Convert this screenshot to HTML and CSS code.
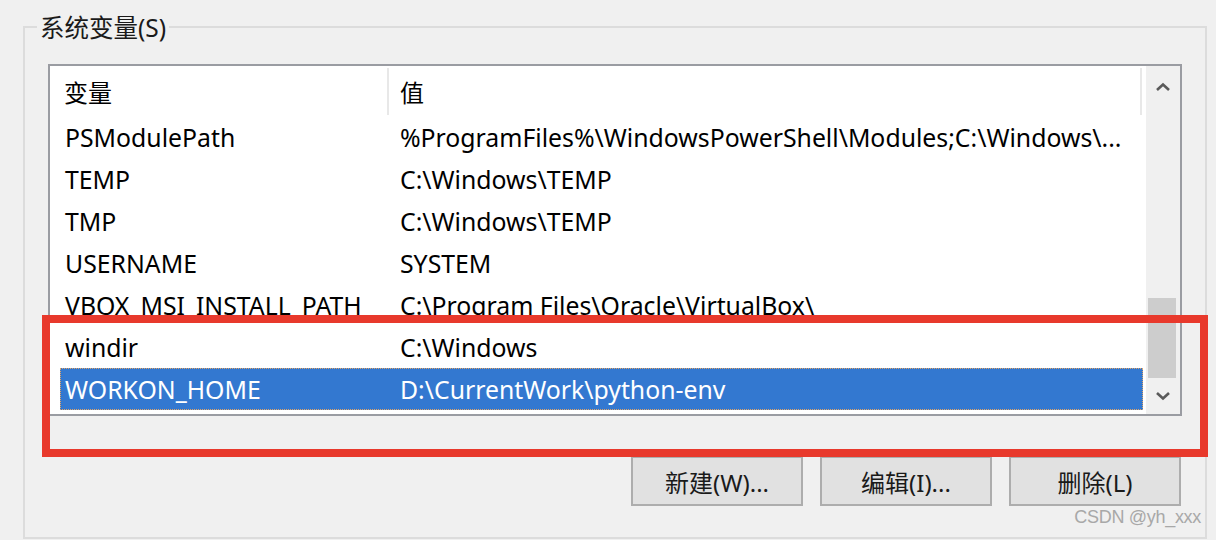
FILE: index.html
```html
<!DOCTYPE html>
<html lang="zh-CN">
<head>
<meta charset="utf-8">
<title>系统变量</title>
<link rel="stylesheet" href="styles.css">
</head>
<body>
<div class="group">
  <div class="group-title">系统变量(S)</div>
  <div class="listview">
    <div class="list-main">
      <div class="header">
        <div class="hcell hcell-first">变量</div>
        <div class="hcell hcell-second">值</div>
      </div>
      <div class="row"><div class="cell c1">PSModulePath</div><div class="cell c2">%ProgramFiles%\WindowsPowerShell\Modules;C:\Windows\...</div></div>
      <div class="row"><div class="cell c1">TEMP</div><div class="cell c2">C:\Windows\TEMP</div></div>
      <div class="row"><div class="cell c1">TMP</div><div class="cell c2">C:\Windows\TEMP</div></div>
      <div class="row"><div class="cell c1">USERNAME</div><div class="cell c2">SYSTEM</div></div>
      <div class="row"><div class="cell c1">VBOX_MSI_INSTALL_PATH</div><div class="cell c2">C:\Program Files\Oracle\VirtualBox\</div></div>
      <div class="row"><div class="cell c1">windir</div><div class="cell c2">C:\Windows</div></div>
      <div class="row selected"><div class="cell c1">WORKON_HOME</div><div class="cell c2">D:\CurrentWork\python-env</div></div>
    </div>
    <div class="scrollbar">
      <div class="sb-btn sb-up">
        <svg width="16" height="10" viewBox="0 0 16 10"><polyline points="2,8 8,2.5 14,8" fill="none" stroke="#5a5a5a" stroke-width="2.6"/></svg>
      </div>
      <div class="sb-track"><div class="sb-thumb"></div></div>
      <div class="sb-btn sb-down">
        <svg width="16" height="10" viewBox="0 0 16 10"><polyline points="2,2 8,7.5 14,2" fill="none" stroke="#5a5a5a" stroke-width="2.6"/></svg>
      </div>
    </div>
  </div>
  <div class="buttons">
    <div class="btn">新建(W)...</div>
    <div class="btn">编辑(I)...</div>
    <div class="btn">删除(L)</div>
  </div>
</div>
<div class="highlight-box"></div>
<div class="watermark">CSDN @yh_xxx</div>
</body>
</html>
```

FILE: styles.css
```css
html, body {
  margin: 0;
  padding: 0;
}
body {
  width: 1216px;
  height: 540px;
  overflow: hidden;
  background: #f0f0f0;
  font-family: "Noto Sans", "Noto Sans CJK SC", sans-serif;
  color: #000;
  position: relative;
}
.group {
  box-sizing: border-box;
  margin: 26px 0 0 23px;
  width: 1184px;
  height: 513px;
  border: 2px solid #dcdcdc;
}
.group-title {
  width: max-content;
  margin: -17px 0 0 12px;
  padding: 0 3px;
  background: #f0f0f0;
  font-size: 24.5px;
  line-height: 34px;
  color: #1a1a1a;
}
.listview {
  box-sizing: border-box;
  margin: 19px 0 0 23px;
  width: 1134px;
  height: 352px;
  border: 2px solid #9a9ca2;
  background: #fff;
  display: flex;
}
.list-main {
  flex: 1;
  overflow: hidden;
}
.header {
  height: 50px;
  display: grid;
  grid-template-columns: 327px 755px;
  padding-left: 10px;
  font-size: 24px;
}
.hcell {
  display: flex;
  align-items: center;
  margin: 2px 0 1px;
}
.hcell-first {
  padding-left: 4px;
}
.hcell-second {
  border-left: 2px solid #e8e8e8;
  border-right: 2px solid #e8e8e8;
  padding-left: 11px;
}
.row {
  box-sizing: border-box;
  margin-left: 10px;
  width: 1083px;
  height: 42px;
  display: grid;
  grid-template-columns: 327px 1fr;
  font-size: 24.8px;
  align-items: center;
  border: 1px solid transparent;
}
.cell {
  white-space: nowrap;
  overflow: hidden;
  line-height: 40px;
}
.c1 {
  padding-left: 4px;
}
.c2 {
  padding-left: 12px;
}
.row.selected {
  background: #3378d0;
  color: #fff;
  border: 1px dotted #e0a468;
}
.scrollbar {
  width: 34px;
  background: #f0f0f0;
  display: flex;
  flex-direction: column;
}
.sb-btn {
  display: flex;
  align-items: center;
  justify-content: center;
}
.sb-up {
  height: 42px;
}
.sb-track {
  height: 270px;
}
.sb-thumb {
  margin: 190px 0 0 2px;
  width: 28px;
  height: 80px;
  background: #cdcdcd;
}
.sb-down {
  flex: 1;
}
.buttons {
  display: flex;
  justify-content: flex-end;
  gap: 17px;
  margin-top: 40px;
  padding-right: 24px;
}
.btn {
  box-sizing: border-box;
  width: 172px;
  height: 50px;
  background: #e1e1e1;
  border: 2px solid #adadad;
  display: flex;
  align-items: center;
  justify-content: center;
  font-size: 24px;
  color: #1a1a1a;
}
.highlight-box {
  position: absolute;
  left: 42px;
  top: 315px;
  width: 1166px;
  height: 142px;
  box-sizing: border-box;
  border: 8px solid #e8392c;
}
.watermark {
  position: absolute;
  right: 15px;
  top: 507px;
  font-family: "Liberation Sans", Arial, sans-serif;
  font-size: 18px;
  color: #a8a8a8;
  letter-spacing: -0.3px;
}
```
